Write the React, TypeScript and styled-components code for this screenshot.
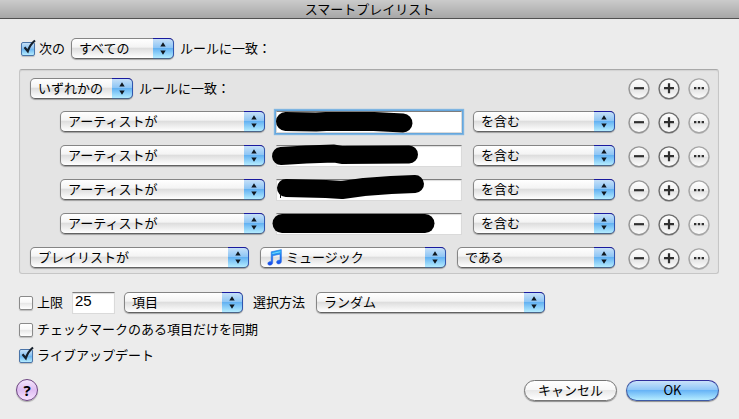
import { ReactNode } from 'react';
import styled, { createGlobalStyle } from 'styled-components';

const GlobalStyle = createGlobalStyle`
  * {
    box-sizing: border-box;
  }

  body {
    margin: 0;
    background: #ececec;
    color: #000;
    font-family: 'Noto Sans CJK JP', sans-serif;
    font-size: 13px;
    line-height: 20px;
  }
`;

const TitleBar = styled.header`
  height: 19px;
  border-bottom: 1px solid #515151;
  background: linear-gradient(#cbcbcb, #a7a7a7);
  text-align: center;
`;

const Title = styled.h1`
  margin: 0;
  font-size: 13px;
  font-weight: 400;
  line-height: 18px;
`;

const MatchRow = styled.div`
  display: flex;
  align-items: center;
  gap: 6px;
  margin: 19px 20px 10px 21px;
`;

const RuleGroup = styled.section`
  display: flex;
  flex-direction: column;
  gap: 11px;
  margin: 0 20px 0 19px;
  padding: 7px 8px 3px 10px;
  border: 1px solid #c6c6c6;
  border-top-color: #a9a9a9;
  border-radius: 3px;
  background: #e4e4e4;
  box-shadow: inset 0 1px 1px #d2d2d2;
`;

const Rule = styled.div<{ $nested?: boolean }>`
  display: flex;
  align-items: flex-end;
  gap: 13px;
  height: 23px;
  padding-left: ${({ $nested }) => ($nested ? '30px' : '0')};
`;

const RuleHead = styled.div`
  display: flex;
  flex: 1;
  align-items: center;
  align-self: center;
  gap: 6px;
`;

const RuleFields = styled.div<{ $columns: string }>`
  display: grid;
  flex: 1;
  grid-template-columns: ${({ $columns }) => $columns};
  align-items: start;
  align-self: flex-start;
  gap: 11px;
`;

const RuleActions = styled.div`
  display: flex;
  gap: 8px;
`;

const RoundButton = styled.button`
  width: 22px;
  height: 22px;
  padding: 0;
  border: 0;
  background: none;

  svg {
    display: block;
  }
`;

const PopupBox = styled.span<{ $width?: number }>`
  position: relative;
  display: block;
  width: ${({ $width }) => ($width ? `${$width}px` : '100%')};
  height: 21px;
  border-radius: 5px;
  box-shadow: 0 1px 1px rgba(0, 0, 0, 0.3);
`;

const PopupSelect = styled.select<{ $icon?: boolean }>`
  appearance: none;
  display: block;
  width: 100%;
  height: 21px;
  padding: 0 22px 2px ${({ $icon }) => ($icon ? '25px' : '7px')};
  border: 1px solid #858585;
  border-bottom-color: #626262;
  border-radius: 5px;
  background: linear-gradient(#fff 0%, #f4f4f4 42%, #dedede 50%, #fff 100%);
  color: #000;
  font-family: inherit;
  font-size: 13px;
  line-height: 18px;
`;

const PopupCap = styled.span`
  position: absolute;
  top: 0;
  right: 0;
  display: flex;
  justify-content: center;
  width: 21px;
  height: 21px;
  border: 1px solid #2f55b0;
  border-top-color: #1a1a9e;
  border-bottom-color: #4a6488;
  border-left: 0;
  border-radius: 0 5px 5px 0;
  background: linear-gradient(#c6e0f8 0%, #8fc6f5 45%, #64b2f2 50%, #b4ecff 100%);
  pointer-events: none;
`;

const PopupIcon = styled.span`
  position: absolute;
  top: 2px;
  left: 7px;
  height: 17px;
  pointer-events: none;
`;

const TextBox = styled.div`
  position: relative;
`;

const TextField = styled.input<{ $focused?: boolean }>`
  display: block;
  width: 100%;
  height: 22px;
  padding: 0 2px 4px;
  border: 1px solid #dadada;
  border-top-color: #7d7d7d;
  border-radius: 0;
  outline: none;
  background: #fff;
  box-shadow: ${({ $focused }) =>
    $focused ? '0 0 0 1px #66a7dd, 0 0 1px 2px #7fb5e2' : 'inset 0 1px 1px #ddd'};
  font-family: 'Liberation Sans', sans-serif;
  font-size: 15px;
`;

const Scribble = styled.svg`
  position: absolute;
  top: 0;
  left: 0;
  overflow: visible;
  pointer-events: none;
`;

const CheckLabel = styled.label`
  display: flex;
  align-items: center;
  gap: 4px;
`;

const CheckFrame = styled.span`
  position: relative;
  width: 14px;
  height: 14px;
`;

const CheckInput = styled.input`
  appearance: none;
  display: block;
  width: 14px;
  height: 14px;
  margin: 0;
  border: 1px solid #8a8a8a;
  border-radius: 2px;
  background: linear-gradient(#fff, #f8f8f8 45%, #e6e6e6 50%, #fff);
  box-shadow: 0 1px 1px rgba(0, 0, 0, 0.2);

  &:checked {
    border-color: #4a74a8;
    background: linear-gradient(#c4dff7, #8ac2f2 45%, #68b3f0 50%, #b5ecff);
  }

  & + svg {
    display: none;
    position: absolute;
    top: -3px;
    left: 0;
    pointer-events: none;
  }

  &:checked + svg {
    display: block;
  }
`;

const Caption = styled.span`
  padding-bottom: 2px;
  line-height: 18px;
`;

const Options = styled.section`
  display: flex;
  flex-direction: column;
  gap: 6px;
  margin: 17px 20px 0 19px;
`;

const LimitRow = styled.div`
  display: flex;
  align-items: center;
  gap: 9px;
  height: 23px;
`;

const LimitField = styled.div`
  width: 43px;
`;

const OrderField = styled.div`
  display: flex;
  align-items: center;
  gap: 11px;
  padding-left: 1px;
`;

const Footer = styled.footer`
  display: flex;
  align-items: center;
  gap: 9px;
  margin: 13px 20px 16px 16px;
`;

const HelpButton = styled.button`
  width: 22px;
  height: 22px;
  margin-right: auto;
  padding: 0;
  border: 1px solid #6d4582;
  border-radius: 50%;
  background: linear-gradient(#f3e4fb, #dfbdf2 50%, #f6e2ff);
  box-shadow: 0 1px 1px rgba(0, 0, 0, 0.3);
  font-family: 'Noto Sans', sans-serif;
  font-size: 15px;
  font-weight: 700;
  line-height: 20px;
`;

const PushButton = styled.button<{ $primary?: boolean }>`
  width: 93px;
  height: 21px;
  padding: 0 0 2px;
  border: 1px solid ${({ $primary }) => ($primary ? '#3d5aa5' : '#757575')};
  border-top-color: ${({ $primary }) => ($primary ? '#2e2e9c' : '#757575')};
  border-radius: 11px;
  background: ${({ $primary }) =>
    $primary
      ? 'linear-gradient(#c9e2fa 0%, #91c7f8 45%, #68b4f6 50%, #b5ecff 100%)'
      : 'linear-gradient(#fff 0%, #f7f7f7 45%, #e8e8e8 50%, #fff 100%)'};
  box-shadow: 0 1px 1px rgba(0, 0, 0, 0.4);
  color: #000;
  font-family: inherit;
  font-size: 13px;
  line-height: 18px;
`;

type PopupProps = {
  label: string;
  value: string;
  width?: number;
  icon?: ReactNode;
};

function Popup({ label, value, width, icon }: PopupProps) {
  return (
    <PopupBox $width={width}>
      <PopupSelect aria-label={label} $icon={Boolean(icon)}>
        <option>{value}</option>
      </PopupSelect>
      {icon && <PopupIcon>{icon}</PopupIcon>}
      <PopupCap>
        <svg width="19" height="19" viewBox="0 0 19 19">
          <path d="M9 3.2 11.7 7.5H6.3zM9 15.8 6.3 11.5h5.4z" fill="#101820" />
        </svg>
      </PopupCap>
    </PopupBox>
  );
}

function Check({ label, checked }: { label: string; checked?: boolean }) {
  return (
    <CheckLabel>
      <CheckFrame>
        <CheckInput type="checkbox" defaultChecked={checked} />
        <svg width="17" height="17" viewBox="0 0 17 17">
          <path
            d="M3.5 8.2 6.8 12.2C8.3 7.8 10.5 4.3 14 1.5"
            fill="none"
            stroke="#16202c"
            strokeWidth="2.2"
          />
        </svg>
      </CheckFrame>
      <Caption>{label}</Caption>
    </CheckLabel>
  );
}

function MusicIcon() {
  return (
    <svg width="16" height="17" viewBox="0 0 16 17">
      <defs>
        <linearGradient id="note" x1="0" y1="0" x2="0" y2="1">
          <stop offset="0" stopColor="#27b5f5" />
          <stop offset="1" stopColor="#1744ee" />
        </linearGradient>
      </defs>
      <path
        d="M4.2 2.8 14.4.6v11.6c0 1.7-1.3 2.7-2.8 2.7-1.2 0-2-.6-2-1.6 0-1.4 1.4-2.3 3.4-2.2V5.2L5.7 6.8v6.7c0 1.7-1.3 2.7-2.9 2.7-1.2 0-2-.6-2-1.6 0-1.4 1.4-2.3 3.4-2.2z"
        fill="url(#note)"
        stroke="#1c5fe0"
        strokeWidth=".5"
      />
      <path d="M5.4 4.5 13.2 2.8" stroke="#79dcff" strokeWidth="1" />
    </svg>
  );
}

const glyphs = [
  { name: '削除', path: 'M6 10.2h10', rim: '#969696' },
  { name: '追加', path: 'M6 10.2h10M11 5.2v10', rim: '#6e6e6e' },
  { name: 'グループ', path: 'M6 10.2h2.4M9.8 10.2h2.4M13.6 10.2h2.4', rim: '#a6a6a6' }
];

function Actions() {
  return (
    <RuleActions>
      {glyphs.map((glyph) => (
        <RoundButton key={glyph.name} type="button" aria-label={glyph.name}>
          <svg width="22" height="22" viewBox="0 0 22 22">
            <defs>
              <linearGradient id="knob" x1="0" y1="0" x2="0" y2="1">
                <stop offset="0" stopColor="#fff" />
                <stop offset=".48" stopColor="#f1f1f1" />
                <stop offset=".52" stopColor="#e3e3e3" />
                <stop offset="1" stopColor="#fff" />
              </linearGradient>
            </defs>
            <circle cx="11" cy="11.3" r="10.2" fill="none" stroke="#bbb" />
            <circle cx="11" cy="10.7" r="9.9" fill="url(#knob)" stroke={glyph.rim} strokeWidth="1.3" />
            <path d={glyph.path} stroke="#303030" strokeWidth="2.2" />
          </svg>
        </RoundButton>
      ))}
    </RuleActions>
  );
}

const artistRules = [
  { id: 1, focused: true, width: 19, path: 'M9.5 10.5 40 11 50 10.5 98 10.5 127 12' },
  { id: 2, width: 18, path: 'M5 11 30 9.5 58 8.5 66 10 133 9.5' },
  { id: 3, width: 18, path: 'M10 9 50 10 66 11 88 8 115 6 139 5' },
  { id: 4, width: 19, path: 'M6 10.5H149' }
];

function App() {
  return (
    <main>
      <GlobalStyle />
      <TitleBar>
        <Title>スマートプレイリスト</Title>
      </TitleBar>
      <MatchRow>
        <Check label="次の" checked />
        <Popup label="一致条件" value="すべての" width={103} />
        <Caption>ルールに一致：</Caption>
      </MatchRow>
      <RuleGroup>
        <Rule>
          <RuleHead>
            <Popup label="グループの一致条件" value="いずれかの" width={103} />
            <Caption>ルールに一致：</Caption>
          </RuleHead>
          <Actions />
        </Rule>
        {artistRules.map((rule) => (
          <Rule key={rule.id} $nested>
            <RuleFields $columns="205fr 186fr 142fr">
              <Popup label="フィールド" value="アーティストが" />
              <TextBox>
                <TextField aria-label="アーティスト" $focused={rule.focused} />
                <Scribble width="186" height="22" viewBox="0 0 186 22">
                  <path
                    d={rule.path}
                    fill="none"
                    stroke="#000"
                    strokeWidth={rule.width}
                    strokeLinecap="round"
                    strokeLinejoin="round"
                  />
                  {rule.id === 3 && <path d="M4.5 15v4" stroke="#111" />}
                </Scribble>
              </TextBox>
              <Popup label="条件" value="を含む" />
            </RuleFields>
            <Actions />
          </Rule>
        ))}
        <Rule>
          <RuleFields $columns="219fr 186fr 158fr">
            <Popup label="フィールド" value="プレイリストが" />
            <Popup label="プレイリスト" value="ミュージック" icon={<MusicIcon />} />
            <Popup label="条件" value="である" />
          </RuleFields>
          <Actions />
        </Rule>
      </RuleGroup>
      <Options>
        <LimitRow>
          <Check label="上限" />
          <LimitField>
            <TextField aria-label="上限数" defaultValue="25" />
          </LimitField>
          <Popup label="単位" value="項目" width={119} />
          <OrderField>
            <Caption>選択方法</Caption>
            <Popup label="選択方法" value="ランダム" width={229} />
          </OrderField>
        </LimitRow>
        <Check label="チェックマークのある項目だけを同期" />
        <Check label="ライブアップデート" checked />
      </Options>
      <Footer>
        <HelpButton type="button">?</HelpButton>
        <PushButton type="button">キャンセル</PushButton>
        <PushButton type="button" $primary>
          OK
        </PushButton>
      </Footer>
    </main>
  );
}

export default App;
